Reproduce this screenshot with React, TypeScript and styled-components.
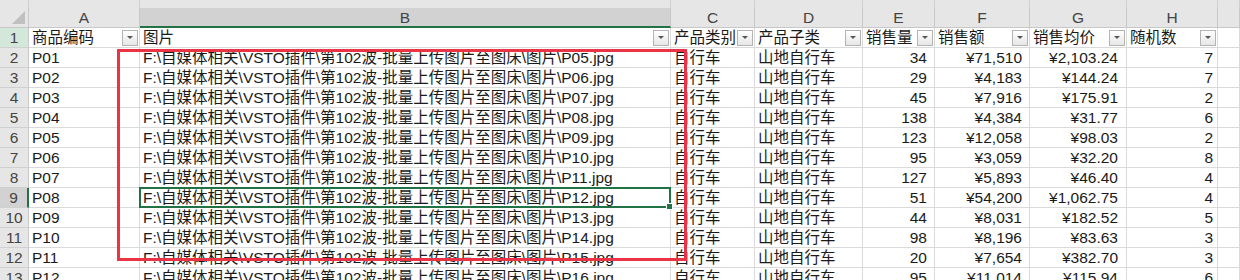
import React from 'react';
import styled, { createGlobalStyle, css } from 'styled-components';

const GlobalStyle = createGlobalStyle`
  body {
    margin: 0;
    background: #ffffff;
    overflow: hidden;
    font-family: "Liberation Sans", "Noto Sans CJK SC", sans-serif;
  }
`;

const COLS = '29px 111px 531px 84px 108px 72px 95px 97px 91px 1fr';

const Wrap = styled.div`
  position: relative;
  width: 1240px;
`;

const Sheet = styled.div`
  display: grid;
  grid-template-columns: ${COLS};
  grid-auto-rows: 20px;
`;

const StripRow = styled.div`
  display: grid;
  grid-template-columns: ${COLS};
  height: 8px;
`;

const Strip = styled.div`
  background: #e6e6e6;
  border-right: 1px solid #d0d0d0;
  box-sizing: border-box;
`;

const Corner = styled.div`
  background: #e6e6e6;
  border-right: 1px solid #c8c8c8;
  border-bottom: 1px solid #c8c8c8;
  box-sizing: border-box;
  display: flex;
  align-items: flex-end;
  justify-content: flex-end;
  padding: 0 3px 3px 0;
`;

const Triangle = styled.div`
  width: 0;
  height: 0;
  border-left: 13px solid transparent;
  border-bottom: 13px solid #c0c0c0;
`;

const ColHead = styled.div<{ $active?: boolean }>`
  background: ${(p) => (p.$active ? '#d2d2d2' : '#e6e6e6')};
  border-right: 1px solid #c8c8c8;
  border-bottom: ${(p) => (p.$active ? '2px solid #217346' : '1px solid #c8c8c8')};
  box-sizing: border-box;
  color: #444;
  font-size: 15.5px;
  line-height: 19px;
  text-align: center;
`;

const RowHead = styled.div<{ $active?: boolean; $green?: boolean }>`
  background: ${(p) => (p.$active ? '#d2d2d2' : p.$green ? '#d3e7da' : '#e6e6e6')};
  border-right: ${(p) => (p.$active ? '2px solid #217346' : '1px solid #c8c8c8')};
  border-bottom: 1px solid #d0d0d0;
  box-sizing: border-box;
  color: #444;
  font-size: 15.5px;
  line-height: 20px;
  text-align: center;
`;

const Cell = styled.div<{ $right?: boolean; $pad?: number; $selected?: boolean }>`
  position: relative;
  border-right: 1px solid #dadada;
  border-bottom: 1px solid #dadada;
  box-sizing: border-box;
  color: #1a1a1a;
  font-size: 15.5px;
  line-height: 20px;
  white-space: nowrap;
  padding: ${(p) => (p.$right ? `0 ${p.$pad ?? 6}px 0 0` : '0 0 0 3px')};
  text-align: ${(p) => (p.$right ? 'right' : 'left')};
  ${(p) =>
    p.$selected &&
    css`
      &::after {
        content: '';
        position: absolute;
        left: -1px;
        top: -1px;
        right: -1px;
        bottom: -1px;
        border: 2px solid #217346;
        pointer-events: none;
      }
      &::before {
        content: '';
        position: absolute;
        right: -3px;
        bottom: -3px;
        width: 5px;
        height: 5px;
        background: #217346;
        border: 1px solid #ffffff;
        z-index: 2;
      }
    `}
`;

const HeadCell = styled(Cell)`
  display: flex;
  align-items: center;
  justify-content: space-between;
  padding: 0 1px 0 3px;
`;

const FilterBtn = styled.div`
  width: 16px;
  height: 16px;
  box-sizing: border-box;
  border: 1px solid #b4b4b4;
  background: linear-gradient(#ffffff, #e6e6e6);
  display: flex;
  align-items: center;
  justify-content: center;
  flex-shrink: 0;
`;

const Arrow = styled.div`
  width: 0;
  height: 0;
  border-left: 3px solid transparent;
  border-right: 3px solid transparent;
  border-top: 3px solid #555;
`;

const RedBox = styled.div`
  position: absolute;
  left: 117px;
  top: 49px;
  width: 570px;
  height: 212px;
  box-sizing: border-box;
  border: 3px solid #ea3344;
  pointer-events: none;
`;

const letters = ['A', 'B', 'C', 'D', 'E', 'F', 'G', 'H', ''];
const titles = ['商品编码', '图片', '产品类别', '产品子类', '销售量', '销售额', '销售均价', '随机数'];

const rows: [number, string, string, string][] = [
  [34, '¥71,510', '¥2,103.24', '7'],
  [29, '¥4,183', '¥144.24', '7'],
  [45, '¥7,916', '¥175.91', '2'],
  [138, '¥4,384', '¥31.77', '6'],
  [123, '¥12,058', '¥98.03', '2'],
  [95, '¥3,059', '¥32.20', '8'],
  [127, '¥5,893', '¥46.40', '4'],
  [51, '¥54,200', '¥1,062.75', '4'],
  [44, '¥8,031', '¥182.52', '5'],
  [98, '¥8,196', '¥83.63', '3'],
  [20, '¥7,654', '¥382.70', '3'],
  [95, '¥11,014', '¥115.94', '6'],
];

const pad = (n: number) => String(n).padStart(2, '0');

const App = () => {
  return (
    <Wrap>
      <GlobalStyle />
      <StripRow>
        {Array.from({ length: 10 }).map((_, i) => (
          <Strip key={i} />
        ))}
      </StripRow>
      <Sheet>
        <Corner>
          <Triangle />
        </Corner>
        {letters.map((l, i) => (
          <ColHead key={i} $active={l === 'B'}>{l}</ColHead>
        ))}

        <RowHead $green>1</RowHead>
        {titles.map((t) => (
          <HeadCell key={t}>
            <span>{t}</span>
            <FilterBtn>
              <Arrow />
            </FilterBtn>
          </HeadCell>
        ))}
        <Cell />

        {rows.map((r, i) => {
          const n = i + 2;
          return (
            <React.Fragment key={n}>
              <RowHead $active={n === 9}>{n}</RowHead>
              <Cell>P{pad(i + 1)}</Cell>
              <Cell $selected={n === 9}>
                F:\自媒体相关\VSTO插件\第102波-批量上传图片至图床\图片\P{pad(i + 5)}.jpg
              </Cell>
              <Cell>自行车</Cell>
              <Cell>山地自行车</Cell>
              <Cell $right $pad={7}>{r[0]}</Cell>
              <Cell $right $pad={7}>{r[1]}</Cell>
              <Cell $right $pad={8}>{r[2]}</Cell>
              <Cell $right $pad={4}>{r[3]}</Cell>
              <Cell />
            </React.Fragment>
          );
        })}
      </Sheet>
      <RedBox />
    </Wrap>
  );
};

export default App;
